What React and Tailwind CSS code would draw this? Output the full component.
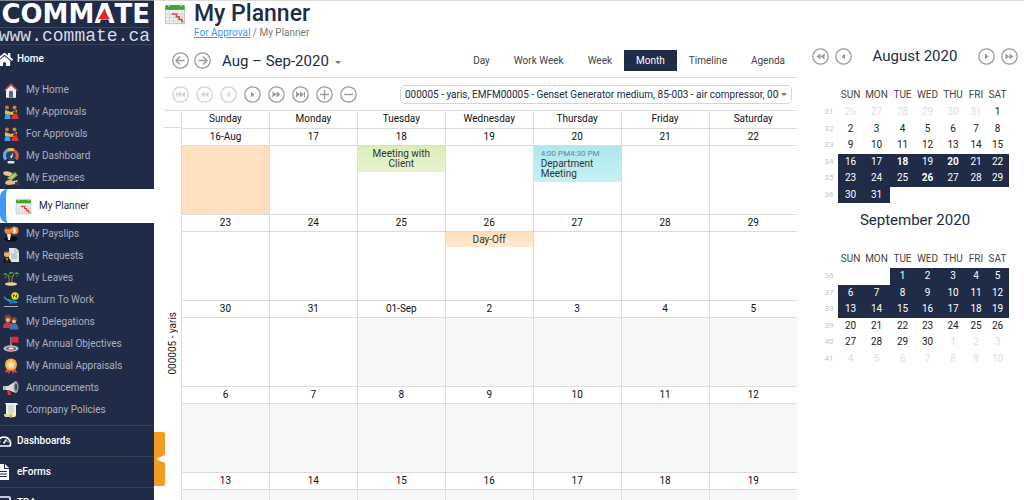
import {useState} from "react";
import {FaHome} from "react-icons/fa";

const dayNames = ["Sunday", "Monday", "Tuesday", "Wednesday", "Thursday", "Friday", "Saturday"];
const shortNames = ["SUN", "MON", "TUE", "WED", "THU", "FRI", "SAT"];

const icons = {
  home: (
    <>
      <path d="M3 7h10v8.500H3z" fill="#e4e6ea" />
      <path d="M8 1 1.500 7.500V9.500L8 3.500l6.500 6V7.500z" fill="#b9474d" />
      <path d="M8 3.500 3 8v7.500h10V8z" fill="#eceef2" />
      <path d="M6 10q2-2.500 4 0v5.500H6z" fill="#5c6479" />
    </>
  ),
  approvals: (
    <>
      <circle cx="4" cy="3.500" r="2" fill="#c07a3c" />
      <circle cx="11.500" cy="3.500" r="2" fill="#c98742" />
      <path d="M2 6l6 2 6-2v4l-6 1-6-1z" fill="#f0b53c" />
      <circle cx="4" cy="9" r="2" fill="#e9b070" />
      <circle cx="12" cy="9" r="2" fill="#6e3b1f" />
      <path d="M1.500 15q0-5 3-5t3 5z" fill="#36a9ea" />
      <path d="M8.500 15q0-5 3.500-5t3.500 5z" fill="#e9322a" />
    </>
  ),
  dashboard: (
    <>
      <circle cx="8" cy="7.500" r="5" fill="#33435f" />
      <path d="M8 1.500A6 6 0 0 0 3 11.500" fill="none" stroke="#56b4f0" strokeWidth="3" />
      <path d="M5 2.300a6 6 0 0 1 6 0" fill="none" stroke="#f1b94d" strokeWidth="3" />
      <path d="M11 2.300a6 6 0 0 1 2 9.200" fill="none" stroke="#e05447" strokeWidth="3" />
      <path d="m7 9 3-4-1 5z" fill="#fff" />
      <rect x="4.500" y="13" width="7" height="2.500" rx="1" fill="#dfe6ee" />
    </>
  ),
  expenses: (
    <>
      <path d="M0 2q5-2 9 1l2 2-3 2-3-1-4-1z" fill="#f0c090" />
      <path d="m4 8 8-6 3 3-7 6z" fill="#7bb144" />
      <path d="m6 8 6-4 1 1-5 4z" fill="#b9d98c" />
      <path d="M3 11q4-2 7 0l5-1-2 4-7 1-4-1z" fill="#eab887" />
      <path d="M12 12h4v3h-4z" fill="#433a3b" />
    </>
  ),
  planner: (
    <>
      <path d="M1 3h14v12H1z" fill="#f1f1f1" stroke="#b9b9b9" strokeWidth=".6" />
      <path d="M4 6v9M7 6v9M10 6v9M13 6v9M1 8h14M1 10.500h14M1 13h14" stroke="#cfcfcf" strokeWidth=".5" />
      <path d="M1 1.500h14V5H1z" fill="#3ba52f" />
      <path d="M3.500.500v2M12.500.500v2" stroke="#d2d2d2" strokeWidth="1.400" />
      <path d="M5.500 8H9v2h2v2h2v2" fill="none" stroke="#de4545" strokeWidth="1.200" />
      <path d="m12 15 3-3v3z" fill="#bdbdbd" />
    </>
  ),
  payslips: (
    <>
      <circle cx="5" cy="4.500" r="3.500" fill="#d98d56" />
      <path d="M2 3q3-4 6 0z" fill="#6b2d16" />
      <ellipse cx="8" cy="13" rx="6.500" ry="2.700" fill="#0c0d12" />
      <path d="M4 8h4l-1 6H5z" fill="#f2dfd6" />
      <circle cx="11.500" cy="4.500" r="4" fill="#f18a2c" />
      <path d="M13 3h-2.500v1.500h2V6H10M11.500 2v5" fill="none" stroke="#fff" strokeWidth=".8" />
    </>
  ),
  requests: (
    <>
      <path d="M6 0h7l3 3v11H6z" fill="#e3e5e8" />
      <path d="M12 0v4h4M8 6h6M8 8h6M8 10h6" fill="none" stroke="#9da1a7" strokeWidth=".8" />
      <circle cx="4" cy="6" r="3" fill="#e9b27d" />
      <path d="M1 5q2-4 6-1z" fill="#8a3d18" />
      <path d="M0 15q0-5 4-5t4 5z" fill="#17181d" />
      <path d="m3 10 1 4 1-4z" fill="#f59a23" />
    </>
  ),
  leaves: (
    <>
      <path d="M5 5q2 4 1 9M11 4Q8 9 9 14" fill="none" stroke="#8a6a42" strokeWidth="1.300" />
      <path d="M5 5Q2 1 0 5q3-1 5 0Q1 6 2 9q1-3 3-4 2 1 3 3 0-3-3-3 2-2 4-1Q7 1 5 5z" fill="#4fae43" />
      <path d="M11 4q-2-4-5-1 3-1 5 1-3 1-2 4 0-3 2-4 3 1 3 4 1-3-3-4 3-1 5 1-1-5-5-1z" fill="#67bd48" />
      <ellipse cx="8" cy="14" rx="6" ry="1.800" fill="#f0d08a" />
    </>
  ),
  work: (
    <>
      <path d="m1 4 3 3 6 1 5 2q-2 2-5 1L3 8 1 6z" fill="#359bdb" />
      <path d="m5 9 5-1 3 3-6 1z" fill="#1c70ae" />
      <circle cx="12" cy="4" r="3.700" fill="#eedf1e" />
      <path d="M10.500 5.500v-3l3 3v-3" fill="none" stroke="#4d4a18" strokeWidth=".9" />
      <path d="M1 14.500h14" stroke="#a9b0bd" />
    </>
  ),
  delegations: (
    <>
      <circle cx="5" cy="4" r="3.500" fill="#7c4630" />
      <circle cx="5" cy="6" r="2.300" fill="#e4a880" />
      <path d="M0 14q0-6 5-6t5 6z" fill="#c43b3b" />
      <circle cx="11" cy="6" r="3" fill="#6e4c39" />
      <circle cx="11" cy="7.500" r="2" fill="#e9b795" />
      <path d="M6.500 15.500q0-6 4.500-6t4.500 6z" fill="#3f74b8" />
    </>
  ),
  objectives: (
    <>
      <ellipse cx="8" cy="12.500" rx="7.500" ry="3.200" fill="#a5c6dc" />
      <ellipse cx="8" cy="12.500" rx="5" ry="2" fill="#c9534f" />
      <ellipse cx="8" cy="12.500" rx="2.500" ry="1" fill="#fff" />
      <path d="M8 1v11.500" stroke="#cbd0d8" />
      <path d="M8 1q4-1 7.500 0v6Q12 6 8 7z" fill="#dc2b3d" />
    </>
  ),
  appraisals: (
    <>
      <path d="m4 9-2 6 3-1 1 2 2-4 2 4 1-2 3 1-2-6z" fill="#e0483e" />
      <circle cx="8" cy="6.500" r="6" fill="#f6b13c" />
      <circle cx="8" cy="6.500" r="4.400" fill="#f8c558" />
      <path d="m8 3 1.100 2.300 2.400.300-1.800 1.700.5 2.500L8 8.600 5.800 9.800l.5-2.500-1.800-1.700 2.400-.3z" fill="#fff3d0" />
    </>
  ),
  announcements: (
    <>
      <path d="M0 6h5l8-5v12L5 10H0z" fill="#d7d9dc" />
      <path d="M0 6h3v4H0z" fill="#b9bcc1" />
      <path d="M4 10h3l1 5H5z" fill="#d83a3a" />
      <ellipse cx="13" cy="7" rx="2.500" ry="6" fill="#9da3ac" />
      <ellipse cx="13" cy="7" rx="1.200" ry="3.500" fill="#454a55" />
    </>
  ),
  policies: (
    <>
      <path d="M2 1h11q2 0 2 2h-2v10q0 2-2 2H3q-2-1-1-3h1V3z" fill="#f1f1df" />
      <path d="M5 4h6M5 6h6M5 8h6M5 10h6" stroke="#a9c9a0" strokeWidth=".9" />
      <path d="M1 12h8v3H3q-2 0-2-3z" fill="#d8d8c4" />
      <circle cx="8" cy="13" r="1.700" fill="#eebc2c" />
      <path d="M7 14h2v2H7z" fill="#d9902c" />
    </>
  ),
};

const menu = [
  {icon: "home", label: "My Home"},
  {icon: "approvals", label: "My Approvals"},
  {icon: "approvals", label: "For Approvals"},
  {icon: "dashboard", label: "My Dashboard"},
  {icon: "expenses", label: "My Expenses"},
  {icon: "planner", label: "My Planner", active: true},
  {icon: "payslips", label: "My Payslips"},
  {icon: "requests", label: "My Requests"},
  {icon: "leaves", label: "My Leaves"},
  {icon: "work", label: "Return To Work"},
  {icon: "delegations", label: "My Delegations"},
  {icon: "objectives", label: "My Annual Objectives"},
  {icon: "appraisals", label: "My Annual Appraisals"},
  {icon: "announcements", label: "Announcements"},
  {icon: "policies", label: "Company Policies"},
];

const weeks = [
  ["16-Aug", "17", "18", "19", "20", "21", "22"],
  ["23", "24", "25", "26", "27", "28", "29"],
  ["30", "31", "01-Sep", "2", "3", "4", "5"],
  ["6", "7", "8", "9", "10", "11", "12"],
  ["13", "14", "15", "16", "17", "18", "19"],
];

const august = [
  [31, 26, 27, 28, 29, 30, 31, 1],
  [32, 2, 3, 4, 5, 6, 7, 8],
  [33, 9, 10, 11, 12, 13, 14, 15],
  [34, 16, 17, 18, 19, 20, 21, 22],
  [35, 23, 24, 25, 26, 27, 28, 29],
  [36, 30, 31, null, null, null, null, null],
];

const september = [
  [36, null, null, 1, 2, 3, 4, 5],
  [37, 6, 7, 8, 9, 10, 11, 12],
  [38, 13, 14, 15, 16, 17, 18, 19],
  [39, 20, 21, 22, 23, 24, 25, 26],
  [40, 27, 28, 29, 30, 1, 2, 3],
  [41, 4, 5, 6, 7, 8, 9, 10],
];

const MenuIcon = ({name, className}) => (
  <svg viewBox="0 0 16 16" className={className} aria-hidden="true">{icons[name]}</svg>
);

const shapes = {
  back: <path d="M12.500 8.500h-8m3.500-4-4 4 4 4" fill="none" stroke="currentColor" strokeWidth="1.400" />,
  forward: <path d="M4.500 8.500h8m-3.500-4 4 4-4 4" fill="none" stroke="currentColor" strokeWidth="1.400" />,
  first: <path d="M4 6h1v5H4zM9 5.500v6l-4-3zM13 5.500v6l-4-3z" fill="currentColor" />,
  rewind: <path d="M8.500 5.500v6l-4-3zM12.500 5.500v6l-4-3z" fill="currentColor" />,
  prev: <path d="M10 5.500v6l-3.500-3z" fill="currentColor" />,
  next: <path d="M7 5.500v6l3.500-3z" fill="currentColor" />,
  fast: <path d="M4.500 5.500v6l4-3zM8.500 5.500v6l4-3z" fill="currentColor" />,
  last: <path d="M4 5.500v6l4-3zM8 5.500v6l4-3zM12 6h1v5h-1z" fill="currentColor" />,
  plus: <path d="M8.500 4v9M4 8.500h9" stroke="currentColor" strokeWidth="1.400" />,
  minus: <path d="M4 8.500h9" stroke="currentColor" strokeWidth="1.400" />,
};

const RoundButton = ({shape, label, faded}) => (
  <button type="button" aria-label={label} className={faded ? "text-[#d2d2d2]" : "text-[#9c9c9c]"}>
    <svg viewBox="0 0 17 17" className="block size-[17px]">
      <circle cx="8.500" cy="8.500" r="7.700" fill="none" stroke="currentColor" strokeWidth="1.300" />
      {shapes[shape]}
    </svg>
  </button>
);

const Logo = () => (
  <div className="flex h-[45px] flex-col items-end overflow-hidden border-t border-b border-t-[#7f8593] border-b-[#35405b] pr-1 text-white">
    <div className="flex h-[26px] items-end font-['DejaVu_Sans'] text-[26px] leading-[25px] font-bold">
      <span>COMM</span>
      <span className="relative">
        A
        <svg viewBox="0 0 10 8" className="absolute bottom-[7px] left-1 h-[11px] w-3" aria-hidden="true">
          <path d="M5 0 10 8H0z" fill="#e02428" />
        </svg>
      </span>
      <span>TE</span>
    </div>
    <div className="h-px w-full shrink-0 bg-[#8e2438]" />
    <div className="font-['Liberation_Mono'] text-[18px] leading-4 text-[#d6dae2]">www.commate.ca</div>
  </div>
);

const MenuItem = ({item}) => {
  if (item.active) {
    return (
      <li className="bg-white">
        <a href="#planner" className="flex h-[34px] items-center rounded-l-lg border-l-6 border-[#3f97fb] pl-[9px] text-[#202b47]">
          <MenuIcon name={item.icon} className="mr-[7px] size-[17px]" />
          {item.label}
        </a>
      </li>
    );
  }
  return (
    <li>
      <a href="#menu" className="flex h-[22px] items-center gap-[7px] pl-[3px] text-[#abb1bf]">
        <MenuIcon name={item.icon} className="size-4" />
        {item.label}
      </a>
    </li>
  );
};

const Sidebar = () => (
  <nav className="w-[154px] shrink-0 overflow-hidden bg-[#202b47] text-[10px] leading-[14px]">
    <Logo />
    <a href="#home" className="flex h-[34px] items-start pt-[6px] font-medium text-white">
      <FaHome className="-ml-1 size-[17px]" />
      <span className="pt-px pl-1">Home</span>
    </a>
    <ul>
      {menu.map((item) => <MenuItem key={item.label} item={item} />)}
    </ul>
    <div className="mt-1 font-medium text-white">
      <a href="#dashboards" className="flex h-[31px] items-center border-t border-[#35405b]">
        <svg viewBox="0 0 16 14" className="-ml-1 h-[14px] w-4" fill="none" stroke="currentColor" strokeWidth="1.700">
          <path d="M2 12a6.500 6.500 0 1 1 12 0zM7.500 9.500l3-4M3.500 7.500h1M11.500 7.500h1" />
        </svg>
        <span className="pl-[5px]">Dashboards</span>
      </a>
      <a href="#eforms" className="flex h-[31px] items-center border-t border-[#35405b]">
        <svg viewBox="0 0 14 16" className="-ml-1 h-4 w-[14px]" fill="currentColor">
          <path fillRule="evenodd" d="M1 0h7v5h5v11H1zM4 7v1h7V7zm0 2.500v1h7v-1zM4 12v1h7v-1z" />
          <path d="m9 0 4 4H9z" />
        </svg>
        <span className="pl-[7px]">eForms</span>
      </a>
      <a href="#tba" className="flex h-[31px] items-center border-t border-[#35405b]">
        <svg viewBox="0 0 16 14" className="-ml-1 h-[14px] w-4" fill="none" stroke="currentColor" strokeWidth="1.700">
          <rect x="1" y="1" width="13" height="12" rx="1" />
          <path d="M5 4v6M10 4v6" />
        </svg>
        <span className="pl-[5px]">TBA</span>
      </a>
    </div>
  </nav>
);

const PlannerHeader = () => (
  <header className="flex items-start gap-2">
    <MenuIcon name="planner" className="mt-[2px] size-[22px]" />
    <div>
      <h1 className="text-[23px] leading-[25px] font-medium text-[#202b47]">My Planner</h1>
      <p className="text-[10px] leading-[13px] text-[#777]">
        <a href="#approval" className="text-[#3f97fb] underline">For Approval</a> / My Planner
      </p>
    </div>
  </header>
);

const views = ["Day", "Work Week", "Week", "Month", "Timeline", "Agenda"];

const Toolbar = () => {
  const [view, setView] = useState("Month");
  return (
    <div className="flex h-[34px] items-center justify-between border-b border-[#dcdcdc] pl-2">
      <div className="flex items-center gap-[5px]">
        <RoundButton shape="back" label="Back" />
        <RoundButton shape="forward" label="Forward" />
        <button type="button" className="flex items-center gap-[6px] pl-[6px] text-[15px] leading-5 text-[#202b47]">
          Aug – Sep-2020
          <span className="mt-1 border-x-3 border-t-3 border-x-transparent border-t-[#777]" />
        </button>
      </div>
      <div className="flex text-[10px] text-[#444]">
        {views.map((name) => (
          <button
            key={name}
            type="button"
            onClick={() => setView(name)}
            className={name === view ? "h-[21px] bg-[#202b47] px-3 text-white" : "h-[21px] px-3"}
          >
            {name}
          </button>
        ))}
      </div>
    </div>
  );
};

const ResourceBar = () => (
  <div className="flex h-[32px] items-center justify-between gap-10 pr-[5px] pl-2">
    <div className="flex shrink-0 gap-[7px]">
      <RoundButton shape="first" label="First resource" faded />
      <RoundButton shape="rewind" label="Previous page" faded />
      <RoundButton shape="prev" label="Previous resource" faded />
      <RoundButton shape="next" label="Next resource" />
      <RoundButton shape="fast" label="Next page" />
      <RoundButton shape="last" label="Last resource" />
      <RoundButton shape="plus" label="Show more" />
      <RoundButton shape="minus" label="Show fewer" />
    </div>
    <div className="relative w-[392px]">
      <select
        aria-label="Resources"
        className="block h-[19px] w-full appearance-none rounded-[5px] border border-[#d5d5d5] pr-3 pl-1 text-[10px] text-[#202b47]"
      >
        <option>000005 - yaris, EMFM00005 - Genset Generator medium, 85-003 - air compressor, 000</option>
      </select>
      <span className="pointer-events-none absolute top-2 right-[5px] border-x-3 border-t-3 border-x-transparent border-t-[#777]" />
    </div>
  </div>
);

const DayCell = ({day, week, index}) => {
  const later = week > 2 || (week === 2 && index > 1);
  return (
    <td className={later ? "h-[69px] border border-[#dcdcdc] bg-[#f7f7f7] p-0 align-top last:border-r-0" : "h-[69px] border border-[#dcdcdc] p-0 align-top last:border-r-0"}>
      {day === "16-Aug" && <div className="h-[68px] bg-[#ffdfbd]" />}
      {week === 0 && day === "18" && (
        <div className="bg-linear-to-b from-[#dcedb9] to-[#e8f3cf] px-3 py-[3px] text-center leading-[10px] text-[#333]">Meeting with Client</div>
      )}
      {week === 0 && day === "20" && (
        <div className="h-9 bg-linear-to-b from-[#aee8ec] to-[#c6f0f3] px-[7px] pt-[3px] leading-[10px] text-[#333]">
          <div className="text-[8px] text-[#66898c]">4:00 PM4:30 PM</div>
          Department Meeting
        </div>
      )}
      {week === 1 && day === "26" && (
        <div className="h-[15px] bg-linear-to-b from-[#ffdfbd] to-[#ffe9d0] text-center leading-[15px] text-[#333]">Day-Off</div>
      )}
    </td>
  );
};

const MonthGrid = () => (
  <div className="flex border-t border-[#dcdcdc]">
    <div className="flex w-[17px] shrink-0 flex-col">
      <div className="h-[17px] border-b border-[#dcdcdc]" />
      <div className="flex grow items-center justify-center text-[10px] leading-[17px] text-[#222]">
        <span className="rotate-180 [writing-mode:vertical-rl]">000005 - yaris</span>
      </div>
    </div>
    <table className="w-full table-fixed border-collapse text-[10px] leading-[14px] text-[#111]">
      <thead>
        <tr>
          {dayNames.map((name) => (
            <th key={name} scope="col" className="h-[17px] border border-t-0 border-[#dcdcdc] p-0 font-normal last:border-r-0">{name}</th>
          ))}
        </tr>
      </thead>
      {weeks.map((days, week) => (
        <tbody key={days[0]}>
          <tr>
            {days.map((day) => (
              <th key={day} className="h-[17px] border border-[#dcdcdc] p-0 font-normal last:border-r-0">{day}</th>
            ))}
          </tr>
          <tr>
            {days.map((day, index) => <DayCell key={day} day={day} week={week} index={index} />)}
          </tr>
        </tbody>
      ))}
    </table>
  </div>
);

const dayClass = (day, inRange, outside, busy) => {
  if (day === null) return "p-0";
  if (busy) return "bg-[#202b47] p-0 font-bold text-white";
  if (inRange) return "bg-[#202b47] p-0 text-white";
  if (outside) return "p-0 text-[#dedede]";
  return "p-0 text-[#222]";
};

const MiniMonth = ({rows, isRange, isOutside, busy = []}) => (
  <table className="mr-[15px] ml-[14px] h-[117px] table-fixed border-collapse text-center text-[10px] leading-[14px]">
    <colgroup>
      <col className="w-[18px]" />
      <col className="w-[25px]" />
      <col className="w-[27px]" />
      <col className="w-[25px]" />
      <col className="w-[25px]" />
      <col className="w-[26px]" />
      <col className="w-[20px]" />
      <col className="w-[23px]" />
    </colgroup>
    <thead>
      <tr className="h-[18px] text-[#444]">
        <td className="p-0" />
        {shortNames.map((name) => <th key={name} scope="col" className="p-0 font-normal">{name}</th>)}
      </tr>
    </thead>
    <tbody>
      {rows.map(([number, ...days], row) => (
        <tr key={number}>
          <th scope="row" className="p-0 text-[8px] font-normal text-[#c4c4c4]">{number}</th>
          {days.map((day, i) => (
            <td key={i} className={dayClass(day, isRange(row), isOutside(row, day), isRange(row) && busy.includes(day))}>{day}</td>
          ))}
        </tr>
      ))}
    </tbody>
  </table>
);

const DatePanel = () => (
  <aside className="w-[218px] shrink-0 border-t border-[#dcdcdc] pt-[45px]">
    <div className="flex h-5 items-center justify-between px-[6px]">
      <div className="flex gap-[6px]">
        <RoundButton shape="rewind" label="Previous year" />
        <RoundButton shape="prev" label="Previous month" />
      </div>
      <h2 className="text-[15px] leading-5 text-[#202b47]">August 2020</h2>
      <div className="flex gap-[6px]">
        <RoundButton shape="next" label="Next month" />
        <RoundButton shape="fast" label="Next year" />
      </div>
    </div>
    <div className="pt-5">
      <MiniMonth rows={august} isRange={(row) => row > 2} isOutside={(row, day) => row === 0 && day > 20} busy={[18, 20, 26]} />
    </div>
    <h2 className="pt-[7px] text-center text-[15px] leading-5 text-[#202b47]">September 2020</h2>
    <div className="pt-5">
      <MiniMonth rows={september} isRange={(row) => row < 3} isOutside={(row, day) => row > 3 && day < 11} />
    </div>
  </aside>
);

const App = () => (
  <div className="relative flex h-screen overflow-hidden bg-white font-[Roboto,sans-serif]">
    <Sidebar />
    <button type="button" aria-label="Collapse menu" className="absolute top-[432px] left-[154px] h-[54px] w-[11px] rounded-r-xs bg-[#f39c25]">
      <svg viewBox="0 0 11 8" className="h-2 w-[11px]" aria-hidden="true">
        <path d="M2 4 11 0v8z" fill="#fff" />
      </svg>
    </button>
    <main className="min-w-0 grow border-t border-[#dcdcdc] pr-[9px] pl-[10px]">
      <PlannerHeader />
      <div className="pt-[5px]">
        <Toolbar />
        <ResourceBar />
        <MonthGrid />
      </div>
    </main>
    <DatePanel />
  </div>
);

export default App;
